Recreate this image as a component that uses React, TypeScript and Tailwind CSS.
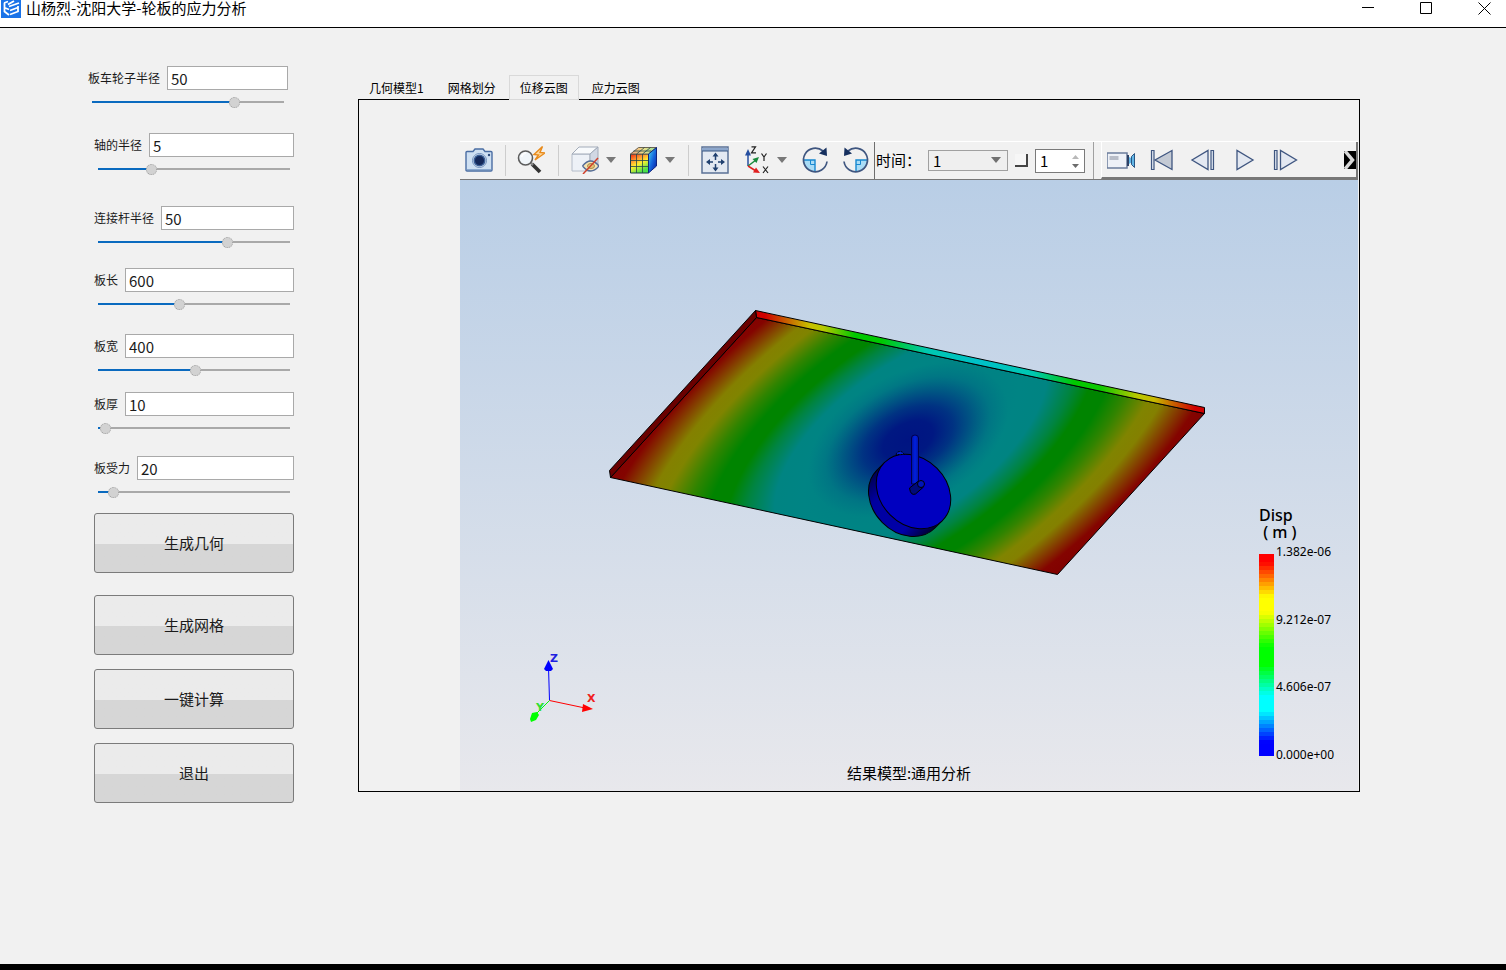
import React, { useState } from 'react';

interface Param {
  id: string;
  label: string;
  value: number;
  max: number;
  row: string;
}

// spacing between the rows is uneven, so each row carries its own
const params: Param[] = [
  { id: 'wheel', label: '板车轮子半径', value: 50, max: 66, row: 'pr-1.5' },
  { id: 'axle', label: '轴的半径', value: 5, max: 19, row: 'pl-1.5 mt-[21px]' },
  { id: 'rod', label: '连接杆半径', value: 50, max: 73, row: 'pl-1.5 mt-[27px]' },
  { id: 'length', label: '板长', value: 600, max: 1420, row: 'pl-1.5 mt-4' },
  { id: 'width', label: '板宽', value: 400, max: 790, row: 'pl-1.5 mt-5' },
  { id: 'thickness', label: '板厚', value: 10, max: 1000, row: 'pl-1.5 mt-3' },
  { id: 'force', label: '板受力', value: 20, max: 345, row: 'pl-1.5 mt-[18px]' },
];

const actions = [
  { label: '生成几何', gap: 'mt-[11px]' },
  { label: '生成网格', gap: 'mt-[22px]' },
  { label: '一键计算', gap: 'mt-3.5' },
  { label: '退出', gap: 'mt-3.5' },
];

const tabs = ['几何模型1', '网格划分', '位移云图', '应力云图'];

const legendLabels = ['1.382e-06', '9.212e-07', '4.606e-07', '0.000e+00'];

// position on the scale -> rgb, with short plateaus on the pure colours
const scale: [number, number[]][] = [
  [0, [0, 0, 255]],
  [0.06, [0, 0, 255]],
  [0.22, [0, 255, 255]],
  [0.29, [0, 255, 255]],
  [0.45, [0, 255, 0]],
  [0.54, [0, 255, 0]],
  [0.72, [255, 255, 0]],
  [0.79, [255, 255, 0]],
  [0.97, [255, 0, 0]],
  [1, [255, 0, 0]],
];

function scaleColor(t: number) {
  const i = Math.max(1, scale.findIndex(([pos]) => pos >= t));
  const [p0, c0] = scale[i - 1];
  const [p1, c1] = scale[i];
  const k = (t - p0) / (p1 - p0);
  return `rgb(${c0.map((c, n) => Math.round(c + (c1[n] - c) * k)).join(',')})`;
}

function TitleBar() {
  return (
    <header className="flex h-7 items-start border-b border-black bg-white text-black">
      <svg className="ml-px shrink-0" width="20" height="18" viewBox="0 0 20 18" aria-hidden="true">
        <rect width="20" height="18" fill="#1a73e8" />
        <g fill="none" stroke="#fff" strokeWidth="1.8">
          <path d="M3.500 3v8.500l4.500 3.500M3 3l4-1.500M3 7.500l5 2" />
          <path d="M7 4.500 13 1M8 6.500l10-3.500M9 10.500l8-3M9 14.500l8-3V6" />
        </g>
      </svg>
      <h1 className="ml-[5px] text-[15px] leading-[15px]">山杨烈-沈阳大学-轮板的应力分析</h1>
      <div className="ml-auto flex gap-3.5">
        <button aria-label="最小化" className="flex h-4 w-11 items-center justify-center">
          <svg width="13" height="13" viewBox="0 0 13 13"><path d="M0 5.500h12" stroke="#000" /></svg>
        </button>
        <button aria-label="最大化" className="flex h-4 w-11 items-center justify-center">
          <svg width="13" height="13" viewBox="0 0 13 13"><path d="M.5.5h11v11H.5z" fill="none" stroke="#000" /></svg>
        </button>
        <button aria-label="关闭" className="flex h-4 w-11 items-center justify-center">
          <svg width="13" height="13" viewBox="0 0 13 13"><path d="m.5.5 12 12m0-12-12 12" stroke="#000" /></svg>
        </button>
      </div>
    </header>
  );
}

function ParamRow({ param }: { param: Param }) {
  const [value, setValue] = useState(param.value);
  const pct = Math.min(100, (value / param.max) * 100);

  return (
    <div className={param.row}>
      <div className="flex items-center gap-[7px]">
        <label htmlFor={param.id} className="shrink-0 text-xs">{param.label}</label>
        <input
          id={param.id}
          value={value}
          onChange={e => setValue(Number(e.target.value) || 0)}
          className="h-6 w-0 flex-1 border border-[#a9a9a9] bg-white px-[3px] text-[15px] outline-none"
        />
      </div>
      <div className="mx-1 mt-0.5 flex h-5 items-center">
        <input
          type="range"
          aria-label={param.label}
          min={0}
          max={param.max}
          value={value}
          onChange={e => setValue(Number(e.target.value))}
          className="h-3 w-full appearance-none bg-[length:100%_2px] bg-center bg-no-repeat [&::-webkit-slider-thumb]:size-[11px] [&::-webkit-slider-thumb]:appearance-none [&::-webkit-slider-thumb]:rounded-full [&::-webkit-slider-thumb]:border [&::-webkit-slider-thumb]:border-dotted [&::-webkit-slider-thumb]:border-[#a0a0a0] [&::-webkit-slider-thumb]:bg-[#d2d2d2]"
          style={{ backgroundImage: `linear-gradient(to right, #0a6abf ${pct}%, #a9a9a9 ${pct}%)` }}
        />
      </div>
    </div>
  );
}

function ToolButton({ label, className, children }: { label: string; className?: string; children: React.ReactNode }) {
  return (
    <button aria-label={label} className={`shrink-0 ${className ?? ''}`}>
      <svg width="28" height="28" viewBox="0 0 28 28" fill="none">{children}</svg>
    </button>
  );
}

function MenuArrow({ label, className }: { label: string; className: string }) {
  return (
    <button aria-label={label} className={`shrink-0 ${className}`}>
      <svg width="10" height="6" viewBox="0 0 10 6"><path d="M0 0h10L5 6z" fill="#787878" /></svg>
    </button>
  );
}

function Separator({ className }: { className: string }) {
  return <span className={`h-[31px] w-px shrink-0 bg-[#cdcdcd] ${className}`} />;
}

function ViewTools() {
  return (
    <div className="flex shrink-0 items-center border-r border-[#6e6e6e] pr-1 pb-px">
      <ToolButton label="截图" className="ml-[5px]">
        <path d="M1 6.500q0-1 1-1h6l2-2.500h8l2 2.500h6q1 0 1 1V24q0 1-1 1H2q-1 0-1-1z" fill="#cfe0f2" stroke="#4a6da3" strokeWidth="1.400" />
        <path d="M2 23.500h24" stroke="#8ba9cf" />
        <circle cx="14.500" cy="14.500" r="7" fill="#e8f1fa" stroke="#6c8cba" />
        <circle cx="14.500" cy="14.500" r="5.300" fill="#15295a" stroke="#3b5f96" strokeWidth="1.500" />
        <circle cx="24" cy="9" r="1.200" fill="#2d4a7c" />
      </ToolButton>
      <Separator className="ml-3" />
      <ToolButton label="快速缩放" className="ml-[11px]">
        <path d="m15 18 8 8" stroke="#333" strokeWidth="3.800" />
        <path d="m13 16 3 3" stroke="#888" strokeWidth="2.500" />
        <circle cx="8.500" cy="12" r="7" fill="#f1f6fa" stroke="#5c5c5c" strokeWidth="1.600" />
        <path d="M4.500 11q1-3.500 4.500-4" stroke="#fff" strokeWidth="1.500" />
        <path d="M25.500.5 17 8.500l4.500.5-3.500 5 10-7-5-.5z" fill="#ffd79a" stroke="#e88b1c" strokeWidth="1.400" />
      </ToolButton>
      <Separator className="ml-[13px]" />
      <ToolButton label="隐藏实体" className="ml-3">
        <path d="M1 8h18v17H1z" fill="#edf1f7" stroke="#b4bcc9" />
        <path d="m1 8 7-7h19l-8 7z" fill="#f8fafc" stroke="#a2abb9" />
        <path d="m19 8 8-7v18l-8 6z" fill="#d1d8e4" stroke="#a2abb9" />
        <path d="M11.500 20q8-10 16.500 0-8 10-16.500 0" fill="#f5e3b3" stroke="#546c96" strokeWidth="1.300" />
        <ellipse cx="20" cy="20" rx="3.500" ry="2.500" fill="#e5c577" stroke="#a98a4a" />
        <path d="M27 12 12 28" stroke="#d0402b" strokeWidth="1.500" />
      </ToolButton>
      <MenuArrow label="隐藏菜单" className="ml-[7px]" />
      <ToolButton label="云图显示" className="ml-[13px]">
        <defs>
          <linearGradient id="cubeFront" x1="0" y1="0" x2=".5" y2="1">
            <stop offset="0" stopColor="#f02010" />
            <stop offset=".35" stopColor="#ff9b30" />
            <stop offset=".6" stopColor="#ffef30" />
            <stop offset="1" stopColor="#49e04a" />
          </linearGradient>
          <linearGradient id="cubeSide" x1="0" y1="0" x2="1" y2="1">
            <stop offset="0" stopColor="#46dff0" />
            <stop offset=".5" stopColor="#1668dd" />
            <stop offset="1" stopColor="#0718a0" />
          </linearGradient>
          <linearGradient id="cubeTop">
            <stop offset="0" stopColor="#ee9878" />
            <stop offset=".5" stopColor="#eee089" />
            <stop offset="1" stopColor="#8bdc9c" />
          </linearGradient>
        </defs>
        <path d="M1.500 8h18v19h-18z" fill="url(#cubeFront)" stroke="#173b4a" />
        <path d="m1.500 8 8-6.500h18L19.500 8z" fill="url(#cubeTop)" stroke="#6d6553" />
        <path d="m19.500 8 8-6.500V20l-8 7z" fill="url(#cubeSide)" stroke="#11247c" />
        <path d="M7.500 8v19M13.500 8v19M1.500 14.500h18M1.500 20.500h18M7.500 8l8-6.500M13.500 8l8-6.500M4.500 5h18" stroke="#22454c" strokeWidth=".8" />
      </ToolButton>
      <MenuArrow label="云图菜单" className="ml-2" />
      <Separator className="ml-[13px]" />
      <ToolButton label="适应窗口" className="ml-3">
        <path d="M1 1h26v26H1z" fill="#e3e9f2" stroke="#5b7297" strokeWidth="1.500" />
        <path d="M1 2h26v3H1z" fill="#8da7cc" />
        <path d="M1 5h26" stroke="#375580" />
        <path d="M14.500 8v6m0 4v6M7 16h5m5 0h5" stroke="#20406f" strokeWidth="1.500" />
        <path d="m11.500 10.500 3-4 3 4zM11.500 21.500l3 4 3-4zM9 13l-4 3 4 3zM20 13l4 3-4 3z" fill="#20406f" />
      </ToolButton>
      <ToolButton label="视图方向" className="ml-3.5">
        <path d="M5 20V7" stroke="#264fa0" strokeWidth="1.500" />
        <path d="M2 9.500 5 3l3 6.500z" fill="#264fa0" />
        <path d="m5 20 8-6" stroke="#178a3c" strokeWidth="1.500" />
        <path d="m16 11-2.500 6-4-4z" fill="#178a3c" />
        <path d="m5 20 8 5" stroke="#d22" strokeWidth="1.500" />
        <path d="m17 27-7-.5 3-5z" fill="#e02020" />
        <g stroke="#222" strokeWidth="1.200">
          <path d="M8.500.8h4l-4 6h4.500" />
          <path d="m18.500 7.500 2.500 3.500 2.500-3.500M21 11v4" />
          <path d="m20 20.500 5 6.500m0-6.500-5 6.500" />
        </g>
      </ToolButton>
      <MenuArrow label="视图菜单" className="ml-1.5" />
      <ToolButton label="顺时针旋转" className="ml-3.5">
        <path d="M2 14h12v12Q3 25 2 14" fill="#a9dcf6" />
        <path d="M2 14h12v12" stroke="#1788d0" strokeWidth="1.400" />
        <path d="M9.500 14v4.500H14" stroke="#1788d0" />
        <path d="M22 5A11.800 11.800 0 1 0 26 15.500" stroke="#3f5680" strokeWidth="1.700" />
        <path d="m25.500 1.500.5 8.500-8-2.500z" fill="#152f5e" />
      </ToolButton>
      <ToolButton label="逆时针旋转" className="ml-[13px]">
        <path d="M26 14H14v12q11-1 12-12" fill="#a9dcf6" />
        <path d="M26 14H14v12" stroke="#1788d0" strokeWidth="1.400" />
        <path d="M18.500 14v4.500H14" stroke="#1788d0" />
        <path d="M6 5A11.800 11.800 0 1 1 2 15.500" stroke="#3f5680" strokeWidth="1.700" />
        <path d="M2.500 1.500 2 10l8-2.500z" fill="#152f5e" />
      </ToolButton>
    </div>
  );
}

function TimeControls() {
  const [step, setStep] = useState(1);

  return (
    <div className="flex shrink-0 items-center gap-[7px] border-r border-[#a0a0a0] pr-2 pl-px text-[15px] text-black">
      <label htmlFor="time" className="w-[45px] whitespace-nowrap">时间：</label>
      <div className="relative">
        <select id="time" className="block h-[21px] w-20 appearance-none border border-[#a0a0a0] bg-[#efefef] px-1 leading-[19px] outline-none">
          <option>1</option>
        </select>
        <svg className="pointer-events-none absolute top-[7px] right-[7px]" width="10" height="6" viewBox="0 0 10 6">
          <path d="M0 0h10L5 6z" fill="#707070" />
        </svg>
      </div>
      <input
        type="checkbox"
        aria-label="锁定时间步"
        className="size-[13px] appearance-none border-r-2 border-b-2 border-[#444] bg-[#f6f6f6]"
      />
      <div className="relative">
        <input
          aria-label="时间步"
          value={step}
          onChange={e => setStep(Number(e.target.value) || 1)}
          className="block h-6 w-[50px] border border-[#7a7a7a] bg-white px-1 outline-none"
        />
        <div className="absolute top-1.5 right-1.5 flex flex-col gap-[5px]">
          <button aria-label="增加" onClick={() => setStep(step + 1)}>
            <svg className="block" width="7" height="4" viewBox="0 0 7 4"><path d="M0 4h7L3.500 0z" fill="#b8b8b8" /></svg>
          </button>
          <button aria-label="减少" onClick={() => setStep(Math.max(1, step - 1))}>
            <svg className="block" width="7" height="4" viewBox="0 0 7 4"><path d="M0 0h7L3.500 4z" fill="#6c6c6c" /></svg>
          </button>
        </div>
      </div>
    </div>
  );
}

function PlaybackTools() {
  return (
    <div className="ml-[7px] flex min-w-0 flex-1 items-center gap-[13px] overflow-hidden border-r-2 border-b-2 border-l border-r-[#777] border-b-[#777] border-l-white pl-[5px]">
      <ToolButton label="录制">
        <path d="M0 7h20v15H0z" fill="#eef1f7" stroke="#6b7c9c" strokeWidth="1.500" />
        <path d="M2.500 10h9v4h-9z" fill="#b8bdc8" />
        <path d="M20 9h2v11h-2z" fill="#2e4266" />
        <path d="m22 11 3 1.500V16l-3 2z" fill="#62b6e6" />
        <path d="m24.500 10.500 3-3v14l-3-3z" fill="#62b6e6" stroke="#2a5582" />
      </ToolButton>
      <ToolButton label="首帧">
        <path d="M3.500 4.500h2.500v19H3.500z" fill="#dfe6f0" stroke="#3f5680" strokeWidth="1.200" />
        <path d="M24 4.500v19L7 14z" fill="#c4cad4" stroke="#3f5680" strokeWidth="1.300" />
      </ToolButton>
      <ToolButton label="上一帧">
        <path d="M19 4.500v19L3 14z" fill="#e3e8f1" stroke="#3f5680" strokeWidth="1.300" />
        <path d="M22 4.500h2.500v19H22z" fill="#dfe6f0" stroke="#3f5680" strokeWidth="1.200" />
      </ToolButton>
      <ToolButton label="播放">
        <path d="M7 4.500v19L23 14z" fill="#e3e8f1" stroke="#3f5680" strokeWidth="1.300" />
      </ToolButton>
      <ToolButton label="下一帧">
        <path d="M3.500 4.500h2.500v19H3.500z" fill="#dfe6f0" stroke="#3f5680" strokeWidth="1.200" />
        <path d="M9.500 4.500v19L25.500 14z" fill="#e3e8f1" stroke="#3f5680" strokeWidth="1.300" />
      </ToolButton>
      <button aria-label="更多" className="ml-auto shrink-0">
        <svg width="12" height="18" viewBox="0 0 12 18">
          <path d="M0 0h12v18H0z" fill="#000" />
          <path d="M1 0 8.500 9 1 18" fill="none" stroke="#d8d8d8" strokeWidth="3.500" />
        </svg>
      </button>
    </div>
  );
}

function PlateScene() {
  return (
    <svg className="absolute inset-0 size-full" viewBox="460 180 898 611" role="img" aria-label="位移云图">
      <defs>
        <radialGradient id="field" gradientUnits="userSpaceOnUse" cx="0" cy="0" r=".54" gradientTransform="matrix(448 96 -490 530 911 440)">
          <stop offset="0" stopColor="#007884" />
          <stop offset=".2" stopColor="#008084" />
          <stop offset=".3" stopColor="#008484" />
          <stop offset=".38" stopColor="#008482" />
          <stop offset=".46" stopColor="#008440" />
          <stop offset=".52" stopColor="#008400" />
          <stop offset=".58" stopColor="#008400" />
          <stop offset=".65" stopColor="#308400" />
          <stop offset=".74" stopColor="#808400" />
          <stop offset=".79" stopColor="#848000" />
          <stop offset=".84" stopColor="#845000" />
          <stop offset=".92" stopColor="#840400" />
          <stop offset="1" stopColor="#800000" />
        </radialGradient>
        {/* low displacement spot above the rod */}
        <radialGradient id="core" gradientUnits="userSpaceOnUse" cx="0" cy="0" r="1" gradientTransform="translate(908 440) rotate(-28) scale(108 66)">
          <stop offset="0" stopColor="#001482" />
          <stop offset=".25" stopColor="#001682" stopOpacity=".98" />
          <stop offset=".45" stopColor="#001a82" stopOpacity=".75" />
          <stop offset=".65" stopColor="#002082" stopOpacity=".4" />
          <stop offset=".82" stopColor="#003084" stopOpacity=".14" />
          <stop offset="1" stopColor="#004084" stopOpacity="0" />
        </radialGradient>
        <linearGradient id="edge" gradientUnits="userSpaceOnUse" x1="756" y1="0" x2="1204" y2="0">
          <stop offset=".02" stopColor="#d00000" />
          <stop offset=".06" stopColor="#c85000" />
          <stop offset=".12" stopColor="#c8c000" />
          <stop offset=".15" stopColor="#b8c800" />
          <stop offset=".22" stopColor="#00c800" />
          <stop offset=".28" stopColor="#00c800" />
          <stop offset=".38" stopColor="#00c8b0" />
          <stop offset=".5" stopColor="#00c0c8" />
          <stop offset=".62" stopColor="#00c8b0" />
          <stop offset=".71" stopColor="#00c800" />
          <stop offset=".77" stopColor="#10c800" />
          <stop offset=".85" stopColor="#b8c800" />
          <stop offset=".89" stopColor="#c8b800" />
          <stop offset=".94" stopColor="#c85000" />
          <stop offset=".98" stopColor="#d00000" />
        </linearGradient>
        <linearGradient id="rim" x1="0" y1="0" x2="1" y2="0">
          <stop offset="0" stopColor="#000050" />
          <stop offset=".25" stopColor="#0000a0" />
          <stop offset=".75" stopColor="#0000a8" />
          <stop offset="1" stopColor="#000030" />
        </linearGradient>
        <linearGradient id="pole">
          <stop offset="0" stopColor="#0010a0" />
          <stop offset=".5" stopColor="#0020e0" />
          <stop offset="1" stopColor="#0014a8" />
        </linearGradient>
      </defs>

      {/* plate */}
      <g stroke="#000" strokeLinejoin="round">
        <path d="M756.500 317.500 1204.500 413.500 1057.500 574.500 610.500 477.500z" fill="url(#field)" />
        <path d="M756.500 317.500 1204.500 413.500 1057.500 574.500 610.500 477.500z" fill="url(#core)" stroke="none" />
        <path d="M755.500 310.500 1204.500 407.500V413.500L756.500 317.500z" fill="url(#edge)" />
        <path d="M755.500 310.500 609.500 470.500 610.500 477.500 756.500 317.500z" fill="#6a0000" />
      </g>

      {/* wheel, drawn along its tilted long axis */}
      <g transform="translate(913.500 491.500) rotate(45)" stroke="#000">
        <path d="M-41 0V11A41 33 0 0 0 41 11V0z" fill="url(#rim)" />
        <ellipse rx="41" ry="33" fill="#0000c0" />
      </g>
      <path d="M896 454.500q1-3 4-3t4 3z" fill="#0020d0" stroke="#000" strokeDasharray="2 1" />

      {/* rod and axle */}
      <path d="M911.500 484V438q0-3 3.500-3t3.500 3v46z" fill="url(#pole)" stroke="#00004a" />
      <path d="m909.500 488 9-7 5 6-8 7q-5 2-6-6" fill="#000a78" stroke="#000" />
      <circle cx="921" cy="484" r="3.500" fill="#0014b8" stroke="#000" />
    </svg>
  );
}

function AxisTriad() {
  return (
    <svg className="absolute bottom-[66px] left-[65px]" width="76" height="75" viewBox="0 0 76 75" aria-label="坐标轴">
      <path d="M24.500 50.500 23.500 17" stroke="#0000ff" />
      <path d="M19 19 23.500 10 28 19l-2 2h-5z" fill="#0000ff" />
      <path d="M24.500 50.500 60 58" stroke="#ff0000" />
      <path d="m58 54 10 5-11 3z" fill="#ff0000" />
      <path d="M24.500 50.500 11 64" stroke="#00ff00" />
      <path d="m5 69 2-6 5-1 2 3-3 5-5 2z" fill="#00ff00" />
      <g fontFamily="'DejaVu Sans'" fontWeight="700" fontSize="11">
        <text x="25" y="12" fill="#2020e0">Z</text>
        <text x="62" y="52" fill="#f02020">X</text>
        <text x="11" y="61" fill="#30e030">Y</text>
      </g>
    </svg>
  );
}

function Legend() {
  const steps = 50;

  return (
    <div className="absolute right-0 bottom-7 w-[99px] font-['Noto_Sans','Noto_Sans_CJK_SC',sans-serif] text-black">
      <p className="mb-[3px] text-base leading-[17px] font-medium">
        Disp
        <br />
        &nbsp;( m )
      </p>
      <div className="flex gap-0.5">
        <svg className="mt-2.5 h-[202px] w-[15px]" viewBox="0 0 15 50" preserveAspectRatio="none" shapeRendering="crispEdges" aria-hidden="true">
          {Array.from({ length: steps }, (_, i) => (
            <rect key={i} y={i} width="15" height="1" fill={scaleColor(1 - i / (steps - 1))} />
          ))}
        </svg>
        <div className="flex h-[219px] flex-col justify-between text-xs leading-4">
          {legendLabels.map(l => <span key={l}>{l}</span>)}
        </div>
      </div>
    </div>
  );
}

function Viewer() {
  return (
    <div>
      <div className="flex h-[39px] border-t border-b border-t-white border-b-[#777]">
        <ViewTools />
        <TimeControls />
        <PlaybackTools />
      </div>
      <div className="relative h-[611px] overflow-hidden bg-linear-to-b from-[#b9cee6] to-[#e8e8ec]">
        <PlateScene />
        <AxisTriad />
        <Legend />
        <p className="absolute inset-x-0 bottom-1.5 text-center text-[15px] leading-6 text-black">结果模型:通用分析</p>
      </div>
    </div>
  );
}

export default function App() {
  const [activeTab, setActiveTab] = useState('位移云图');

  return (
    <div className="flex min-h-screen flex-col border-b-[6px] border-black bg-[#f1f1f1] font-['Noto_Sans_CJK_SC',sans-serif] text-[#1a1a1a]">
      <TitleBar />
      <main className="flex flex-1 items-start pr-[146px] pl-[88px]">
        <aside className="w-[206px] shrink-0 pt-[38px]">
          {params.map(p => <ParamRow key={p.id} param={p} />)}
          <div className="flex flex-col pl-1.5">
            {actions.map(a => (
              <button
                key={a.label}
                className={`h-[60px] rounded-[3px] border border-[#7b7b7b] bg-linear-to-b from-[#ebebeb] from-52% to-[#d6d6d6] to-52% text-[15px] ${a.gap}`}
              >
                {a.label}
              </button>
            ))}
          </div>
        </aside>

        <section className="ml-16 min-w-0 flex-1 pt-[47px]">
          <div role="tablist" className="relative -mb-px flex gap-0.5 text-xs text-black">
            {tabs.map(tab => (
              <button
                key={tab}
                role="tab"
                aria-selected={activeTab === tab}
                onClick={() => setActiveTab(tab)}
                className={`h-[25px] border px-2.5 ${
                  activeTab === tab ? 'border-[#d9d9d9] bg-[#f1f1f1]' : 'border-transparent'
                }`}
              >
                {tab}
              </button>
            ))}
          </div>
          <div role="tabpanel" className="border border-black pt-[41px] pr-px pl-[101px]">
            <Viewer />
          </div>
        </section>
      </main>
    </div>
  );
}
